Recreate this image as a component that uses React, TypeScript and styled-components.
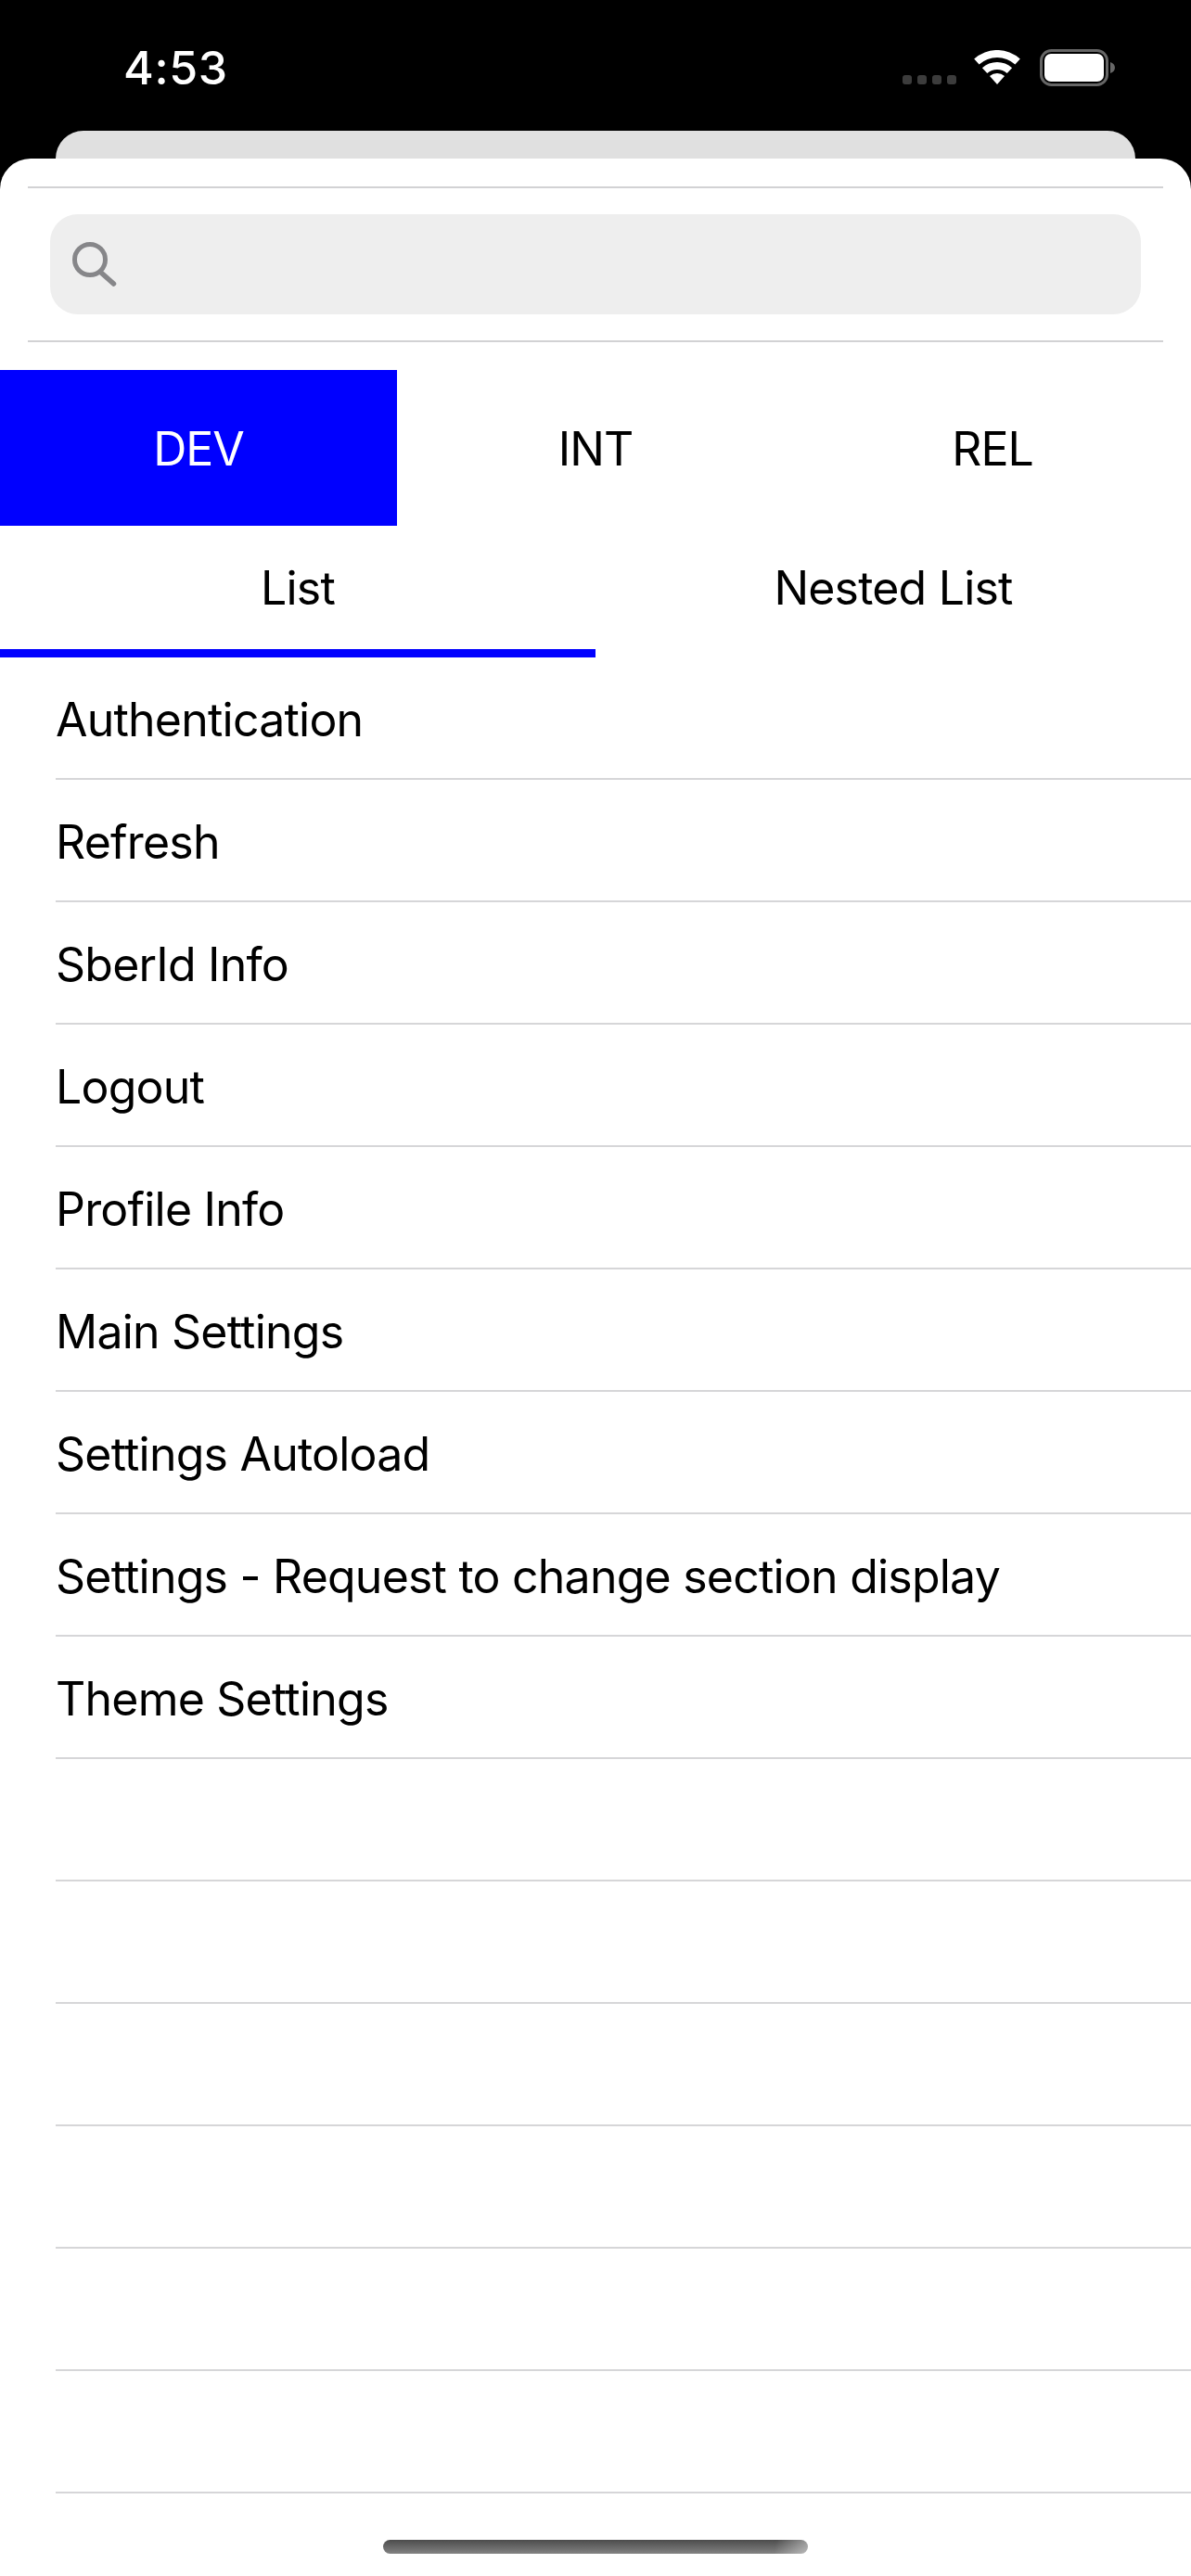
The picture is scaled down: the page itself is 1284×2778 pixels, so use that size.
import { useState } from "react";
import styled, { createGlobalStyle } from "styled-components";

const GlobalStyle = createGlobalStyle`
  html, body {
    margin: 0;
    padding: 0;
    background: #000;
  }
  * {
    box-sizing: border-box;
  }
`;

const Screen = styled.div`
  position: relative;
  width: 1284px;
  height: 2778px;
  overflow: hidden;
  background: #000;
  font-family: Inter, "Liberation Sans", sans-serif;
  color: #000;
`;

const StatusBar = styled.div`
  display: flex;
  align-items: flex-start;
  justify-content: space-between;
  height: 141px;
  padding: 45px 81px 0 133px;
`;

const Time = styled.div`
  font-size: 50px;
  font-weight: 500;
  line-height: 56px;
  letter-spacing: 0.6px;
  color: #fff;
`;

const StatusIcons = styled.div`
  display: flex;
  align-items: flex-start;
  padding-top: 8px;
`;

const SignalDots = styled.div`
  display: flex;
  gap: 6px;
  margin: 28px 19px 0 0;
`;

const Dot = styled.span`
  width: 10px;
  height: 10px;
  border-radius: 3px;
  background: #3c3c3c;
`;

const BackCard = styled.div`
  height: 30px;
  margin: 0 60px;
  border-radius: 30px 30px 0 0;
  background: #e0e0e0;
`;

const Sheet = styled.div`
  height: 2607px;
  padding-top: 30px;
  border-radius: 33px 33px 0 0;
  background: #fff;
`;

const SearchSection = styled.div`
  margin: 0 30px;
  padding: 28px 24px;
  border-top: 2px solid #d2d2d4;
  border-bottom: 2px solid #d2d2d4;
`;

const SearchField = styled.div`
  display: flex;
  align-items: center;
  gap: 20px;
  height: 108px;
  padding: 0 24px;
  border-radius: 30px;
  background: #eee;
`;

const SearchInput = styled.input`
  flex: 1;
  min-width: 0;
  border: 0;
  outline: 0;
  background: transparent;
  font: inherit;
  font-size: 50px;
`;

const Segments = styled.div`
  display: grid;
  grid-template-columns: repeat(3, 1fr);
  height: 168px;
  margin-top: 30px;
`;

const Segment = styled.button<{ $active: boolean }>`
  border: 0;
  padding: 2px 0 0;
  font-family: inherit;
  font-size: 50px;
  font-weight: 370;
  letter-spacing: -1px;
  background: ${(p) => (p.$active ? "#00f" : "#fff")};
  color: ${(p) => (p.$active ? "#fff" : "#000")};
`;

const Tabs = styled.div`
  display: grid;
  grid-template-columns: 1fr 1fr;
  height: 142px;
`;

const Tab = styled.button<{ $active: boolean }>`
  border: 0;
  border-bottom: 9px solid ${(p) => (p.$active ? "#00f" : "#fff")};
  padding: 0;
  background: #fff;
  font-family: inherit;
  font-size: 50px;
  font-weight: 400;
  letter-spacing: -0.8px;
  color: #000;
`;

const Row = styled.div`
  display: flex;
  align-items: center;
  height: 132px;
  margin-left: 60px;
  padding-top: 3px;
  border-bottom: 2px solid #d6d6d8;
  font-size: 50px;
  font-weight: 400;
  letter-spacing: -0.78px;
`;

const HomeIndicator = styled.div`
  position: absolute;
  left: 413px;
  bottom: 24px;
  width: 458px;
  height: 15px;
  border-radius: 8px;
  background: linear-gradient(100deg, transparent 92%, rgba(255, 255, 255, 0.45) 100%),
    linear-gradient(180deg, #4c4c4c, #828282);
`;

const ITEMS = [
  "Authentication",
  "Refresh",
  "SberId Info",
  "Logout",
  "Profile Info",
  "Main Settings",
  "Settings Autoload",
  "Settings - Request to change section display",
  "Theme Settings",
  "",
  "",
  "",
  "",
  "",
  "",
];

const WifiIcon = () => (
  <svg width="50" height="38" viewBox="0 0 50 38" style={{ marginTop: 1, marginRight: 21 }}>
    <path d="M0.2 9.5 A37 37 0 0 1 49.8 9.5 L44.4 15.4 A29 29 0 0 0 5.6 15.4 Z" fill="#fff" />
    <path d="M8.9 19.2 A24 24 0 0 1 41.1 19.2 L35.7 25.1 A16 16 0 0 0 14.3 25.1 Z" fill="#fff" />
    <path d="M17 28.1 A12 12 0 0 1 33 28.1 L25 37 Z" fill="#fff" />
  </svg>
);

const BatteryIcon = () => (
  <svg width="82" height="40" viewBox="0 0 82 40">
    <rect x="1.5" y="1.5" width="71" height="37" rx="11" fill="none" stroke="#666" strokeWidth="3" />
    <rect x="5" y="5" width="64" height="30" rx="7" fill="#fff" />
    <path d="M76 14 C79 15 81 17 81 20 C81 23 79 25 76 26 Z" fill="#666" />
  </svg>
);

const SearchIcon = () => (
  <svg width="48" height="48" viewBox="0 0 48 48">
    <circle cx="19" cy="19" r="16.5" fill="none" stroke="#868689" strokeWidth="5" />
    <path d="M31 33 L44.5 45" fill="none" stroke="#868689" strokeWidth="5.5" strokeLinecap="round" />
  </svg>
);

export default function App(): JSX.Element {
  const [env, setEnv] = useState("DEV");
  const [tab, setTab] = useState("List");

  return (
    <Screen>
      <GlobalStyle />
      <StatusBar>
        <Time>4:53</Time>
        <StatusIcons>
          <SignalDots>
            <Dot />
            <Dot />
            <Dot />
            <Dot />
          </SignalDots>
          <WifiIcon />
          <BatteryIcon />
        </StatusIcons>
      </StatusBar>
      <BackCard />
      <Sheet>
        <SearchSection>
          <SearchField>
            <SearchIcon />
            <SearchInput />
          </SearchField>
        </SearchSection>
        <Segments>
          {["DEV", "INT", "REL"].map((name) => (
            <Segment key={name} $active={env === name} onClick={() => setEnv(name)}>
              {name}
            </Segment>
          ))}
        </Segments>
        <Tabs>
          {["List", "Nested List"].map((name) => (
            <Tab key={name} $active={tab === name} onClick={() => setTab(name)}>
              {name}
            </Tab>
          ))}
        </Tabs>
        {ITEMS.map((label, i) => (
          <Row key={i}>{label}</Row>
        ))}
      </Sheet>
      <HomeIndicator />
    </Screen>
  );
}
